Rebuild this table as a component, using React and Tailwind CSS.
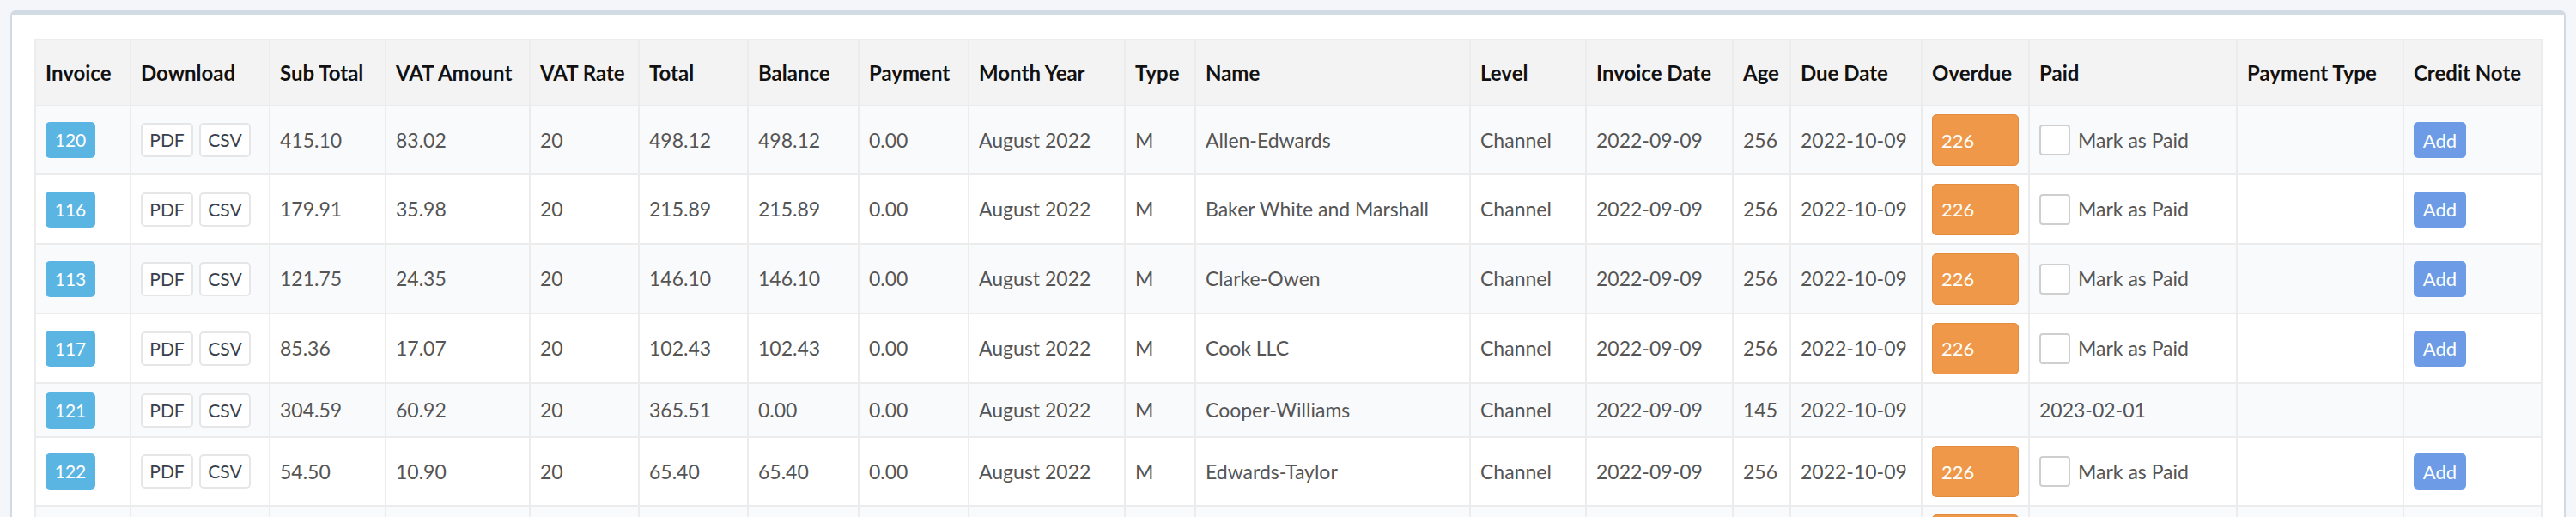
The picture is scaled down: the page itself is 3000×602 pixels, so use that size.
import React from 'react';

const columns = [
  { label: 'Invoice', w: 'w-[111px]' },
  { label: 'Download', w: 'w-[162px]' },
  { label: 'Sub Total', w: 'w-[135px]' },
  { label: 'VAT Amount', w: 'w-[168px]' },
  { label: 'VAT Rate', w: 'w-[127px]' },
  { label: 'Total', w: 'w-[127px]' },
  { label: 'Balance', w: 'w-[129px]' },
  { label: 'Payment', w: 'w-[128px]' },
  { label: 'Month Year', w: 'w-[182px]' },
  { label: 'Type', w: 'w-[82px]' },
  { label: 'Name', w: 'w-[320px]' },
  { label: 'Level', w: 'w-[135px]' },
  { label: 'Invoice Date', w: 'w-[171px]' },
  { label: 'Age', w: 'w-[67px]' },
  { label: 'Due Date', w: 'w-[153px]' },
  { label: 'Overdue', w: 'w-[125px]' },
  { label: 'Paid', w: 'w-[242px]' },
  { label: 'Payment Type', w: 'w-[194px]' },
  { label: 'Credit Note', w: 'w-[161px]' },
];

const invoices = [
  { id: 120, sub: '415.10', vat: '83.02', total: '498.12', balance: '498.12', name: 'Allen-Edwards', age: 256, overdue: 226, h: 'h-[80px]' },
  { id: 116, sub: '179.91', vat: '35.98', total: '215.89', balance: '215.89', name: 'Baker White and Marshall', age: 256, overdue: 226, h: 'h-[81px]' },
  { id: 113, sub: '121.75', vat: '24.35', total: '146.10', balance: '146.10', name: 'Clarke-Owen', age: 256, overdue: 226, h: 'h-[81px]' },
  { id: 117, sub: '85.36', vat: '17.07', total: '102.43', balance: '102.43', name: 'Cook LLC', age: 256, overdue: 226, h: 'h-[81px]' },
  { id: 121, sub: '304.59', vat: '60.92', total: '365.51', balance: '0.00', name: 'Cooper-Williams', age: 145, paidOn: '2023-02-01', h: 'h-[63px]' },
  { id: 122, sub: '54.50', vat: '10.90', total: '65.40', balance: '65.40', name: 'Edwards-Taylor', age: 256, overdue: 226, h: 'h-[80px]' },
  { id: 119, sub: '212.40', vat: '42.48', total: '254.88', balance: '254.88', name: 'Fisher Group', age: 256, overdue: 226, h: 'h-[80px]' },
];

const cell = 'border-2 border-[#ececec] px-[11px] py-0 align-middle whitespace-nowrap';

function Row({ inv, striped }) {
  return (
    <tr className={`${inv.h} ${striped ? 'bg-[#f9fafc]' : 'bg-white'}`}>
      <td className={cell}>
        <span className="inline-flex h-[42px] w-[58px] items-center justify-center rounded-[5px] bg-[#5ab5e2] text-[21px] text-white">
          {inv.id}
        </span>
      </td>
      <td className={cell}>
        <div className="flex gap-[7px]">
          <button className="h-[40px] w-[61px] rounded-[5px] border-2 border-[#e6e6e6] bg-white text-[21px] text-[#3a3f4e]">PDF</button>
          <button className="h-[40px] w-[60px] rounded-[5px] border-2 border-[#e6e6e6] bg-white text-[21px] text-[#3a3f4e]">CSV</button>
        </div>
      </td>
      <td className={cell}>{inv.sub}</td>
      <td className={cell}>{inv.vat}</td>
      <td className={cell}>20</td>
      <td className={cell}>{inv.total}</td>
      <td className={cell}>{inv.balance}</td>
      <td className={cell}>0.00</td>
      <td className={cell}>August 2022</td>
      <td className={cell}>M</td>
      <td className={cell}>{inv.name}</td>
      <td className={cell}>Channel</td>
      <td className={cell}>2022-09-09</td>
      <td className={cell}>{inv.age}</td>
      <td className={cell}>2022-10-09</td>
      <td className={cell}>
        {inv.overdue && (
          <div className="flex h-[60px] w-full items-center rounded-[5px] border border-[#e38b3e] bg-[#f0984a] px-[10px] text-[22px] text-white">
            {inv.overdue}
          </div>
        )}
      </td>
      <td className={cell}>
        {inv.paidOn ? (
          inv.paidOn
        ) : (
          <label className="flex items-center gap-[9px]">
            <span className="h-[36px] w-[36px] rounded-[4px] border-2 border-[#cfcfcf] bg-white" />
            <span>Mark as Paid</span>
          </label>
        )}
      </td>
      <td className={cell}></td>
      <td className={cell}>
        {inv.overdue && (
          <button className="h-[42px] w-[61px] rounded-[5px] bg-[#6d9be6] text-[22px] text-white">Add</button>
        )}
      </td>
    </tr>
  );
}

export default function App() {
  return (
    <div className="min-h-screen bg-[#f4f6f9] p-[12px] font-[Lato,'Liberation_Sans',sans-serif]">
      <div className="rounded-t-[6px] border-x-2 border-t-[5px] border-[#d2dbe3] bg-white pl-[26px] pr-[27px] pt-[28px] pb-[20px]">
        <table className="w-full table-fixed border-collapse text-left text-[23px] text-[#555]">
          <colgroup>
            {columns.map((c) => (
              <col key={c.label} className={c.w} />
            ))}
          </colgroup>
          <thead>
            <tr className="h-[77px] bg-[#f3f3f3]">
              {columns.map((c) => (
                <th key={c.label} className={`${cell} text-[24px] font-bold text-[#111]`}>
                  {c.label}
                </th>
              ))}
            </tr>
          </thead>
          <tbody>
            {invoices.map((inv, i) => (
              <Row key={inv.id} inv={inv} striped={i % 2 === 0} />
            ))}
          </tbody>
        </table>
      </div>
    </div>
  );
}
